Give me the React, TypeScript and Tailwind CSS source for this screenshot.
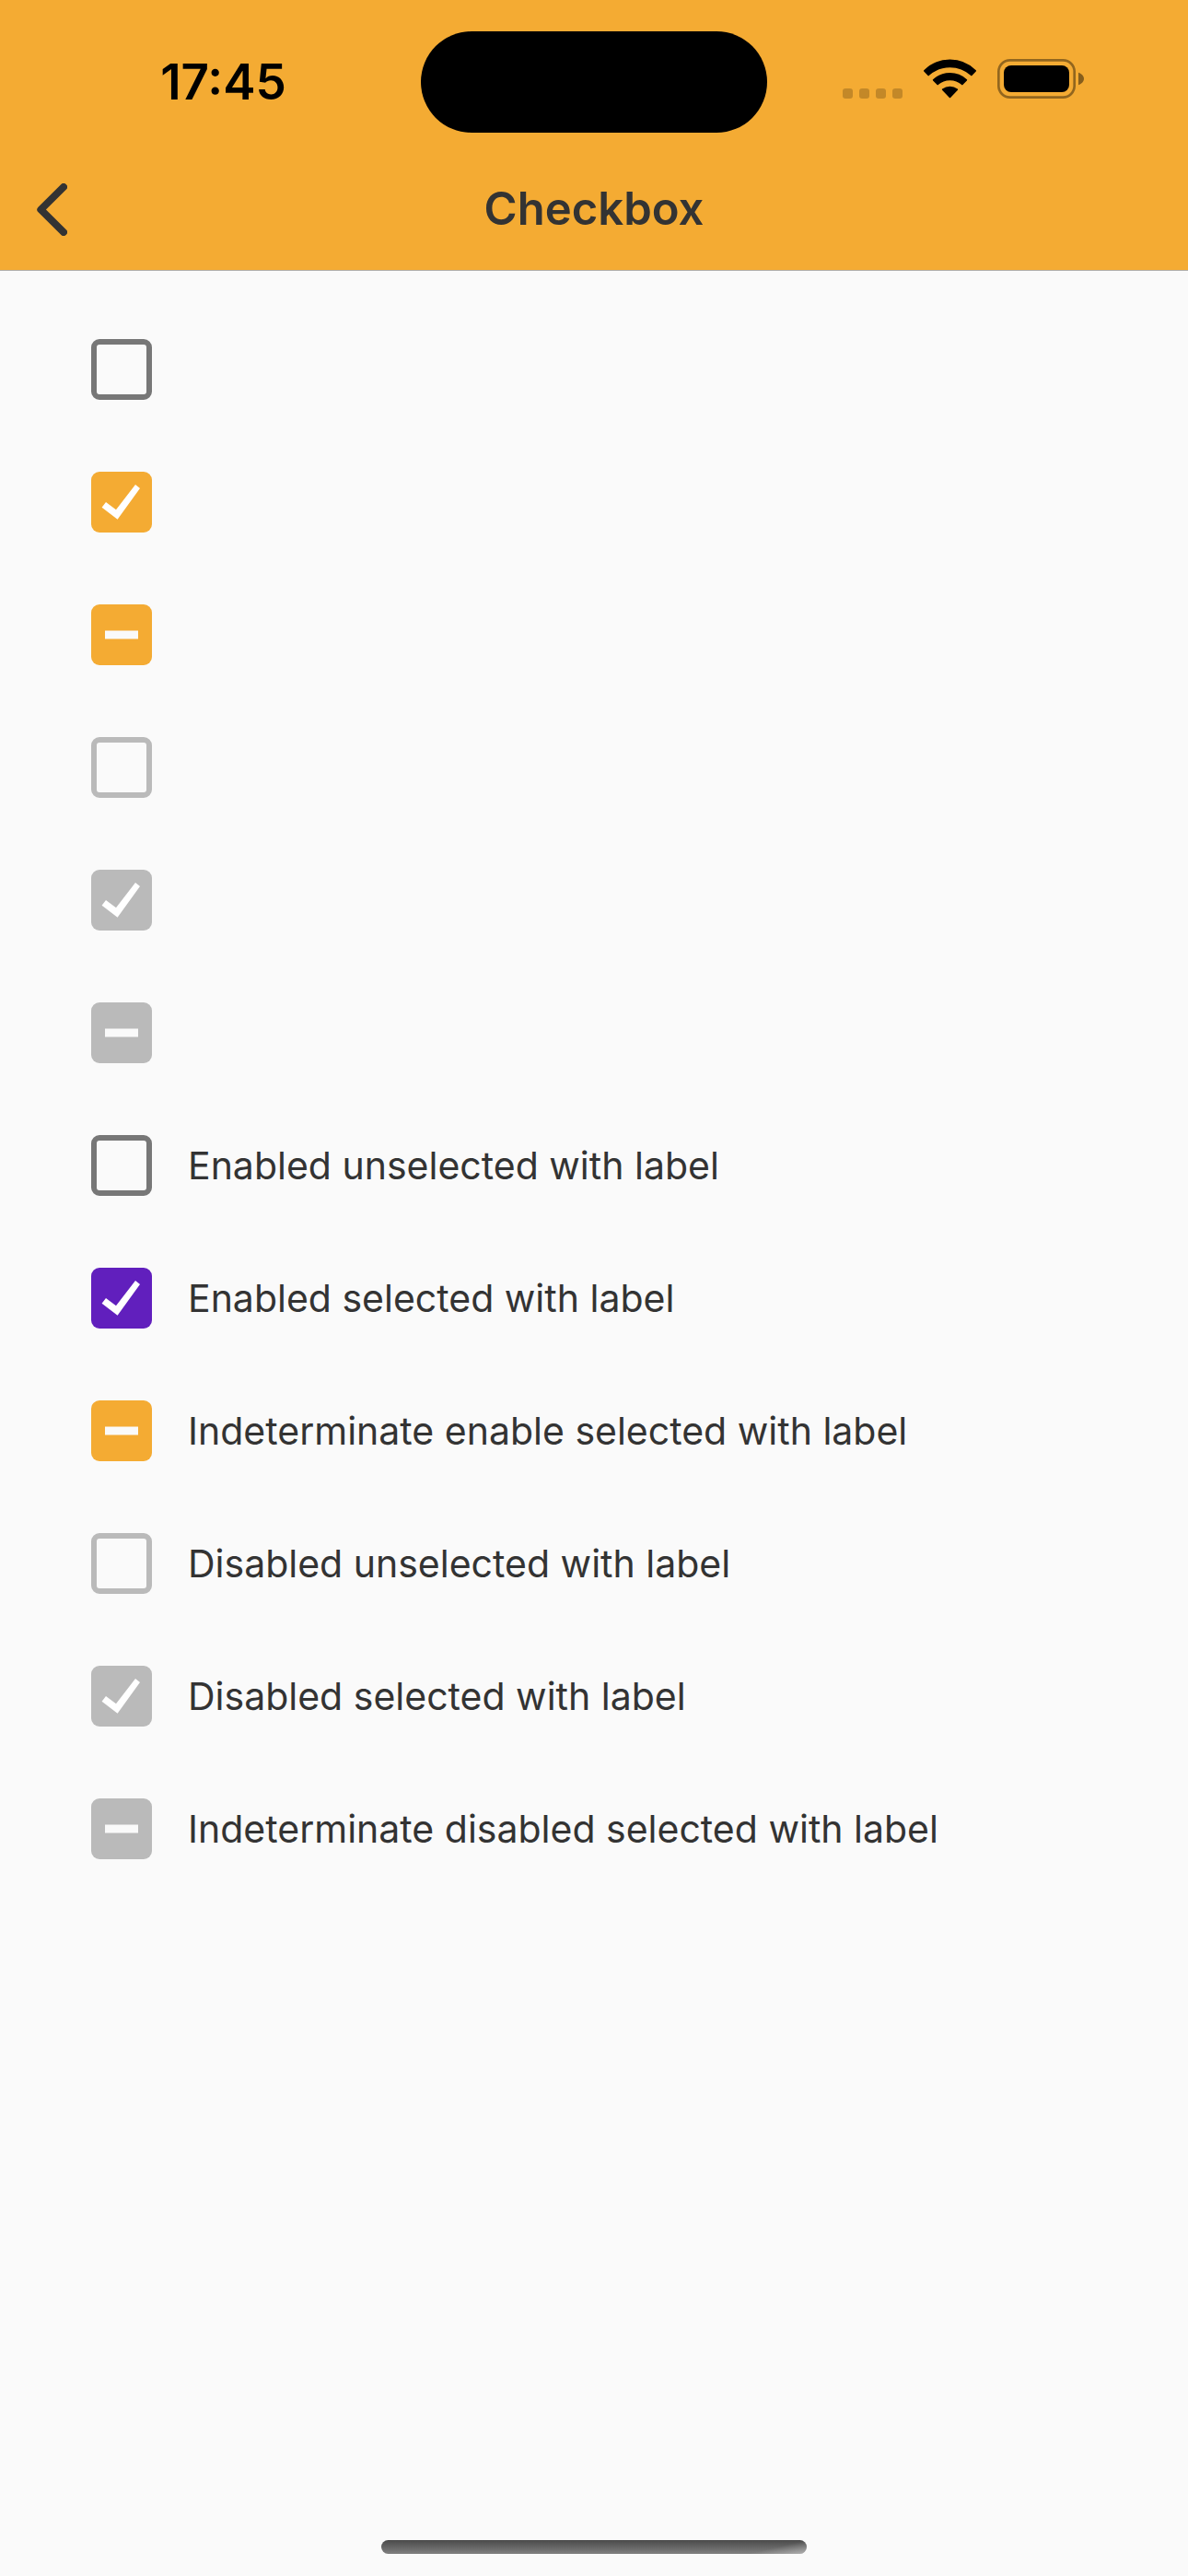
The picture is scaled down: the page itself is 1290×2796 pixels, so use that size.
import { useEffect, useRef, useState } from 'react'
import clsx from 'clsx'

type Mark = 'none' | 'check' | 'dash'

interface Item {
  mark: Mark
  disabled?: boolean
  purple?: boolean
  label?: string
  name: string
}

const items: Item[] = [
  { mark: 'none', name: 'Enabled unselected' },
  { mark: 'check', name: 'Enabled selected' },
  { mark: 'dash', name: 'Enabled indeterminate' },
  { mark: 'none', disabled: true, name: 'Disabled unselected' },
  { mark: 'check', disabled: true, name: 'Disabled selected' },
  { mark: 'dash', disabled: true, name: 'Disabled indeterminate' },
  { mark: 'none', name: 'l1', label: 'Enabled unselected with label' },
  { mark: 'check', purple: true, name: 'l2', label: 'Enabled selected with label' },
  { mark: 'dash', name: 'l3', label: 'Indeterminate enable selected with label' },
  { mark: 'none', disabled: true, name: 'l4', label: 'Disabled unselected with label' },
  { mark: 'check', disabled: true, name: 'l5', label: 'Disabled selected with label' },
  { mark: 'dash', disabled: true, name: 'l6', label: 'Indeterminate disabled selected with label' },
]

function CheckRow({ item }: { item: Item }) {
  const [mark, setMark] = useState<Mark>(item.mark)
  const ref = useRef<HTMLInputElement>(null)

  useEffect(() => {
    if (ref.current) ref.current.indeterminate = mark === 'dash'
  }, [mark])

  const empty = mark === 'none'

  return (
    <li className="flex h-36 items-center">
      <label className="flex items-center gap-[39px]">
        <span className="grid size-[66px] shrink-0">
          <input
            ref={ref}
            type="checkbox"
            checked={mark === 'check'}
            disabled={item.disabled}
            aria-label={item.label ? undefined : item.name}
            onChange={() => setMark(mark === 'check' ? 'none' : 'check')}
            className={clsx(
              'col-start-1 row-start-1 size-[66px] appearance-none rounded-[9px]',
              empty && 'border-6',
              empty && (item.disabled ? 'border-[#bababa]' : 'border-[#777777]'),
              !empty && item.disabled && 'bg-[#bababa]',
              !empty && !item.disabled && (item.purple ? 'bg-[#611fbd]' : 'bg-[#f4ab33]'),
            )}
          />
          {!empty && (
            <svg
              viewBox="0 0 66 66"
              className="pointer-events-none col-start-1 row-start-1 size-[66px]"
              aria-hidden="true"
            >
              {mark === 'check' ? (
                <path d="M11.6 38.8 16 33 27 41.3 48 14 53 18 28.6 51.8Z" fill="#ffffff" />
              ) : (
                <path d="M15 28.4H51V37.6H15Z" fill="#fafafa" />
              )}
            </svg>
          )}
        </span>
        {item.label && <span className="text-[41px] leading-[54px] text-[#333333]">{item.label}</span>}
      </label>
    </li>
  )
}

function StatusIcons() {
  return (
    <div className="flex items-end justify-center gap-[23px] pr-1 pb-2">
      <div className="flex gap-[7px]">
        {[0, 1, 2, 3].map((i) => (
          <span key={i} className="size-[11px] rounded-[3px] bg-black/20" />
        ))}
      </div>
      <svg viewBox="342 75 171 129" className="h-[43px] w-[57px]" aria-hidden="true">
        <g stroke="#000" strokeWidth="5" strokeLinejoin="round">
          <path d="M344.500 113.500A117 117 0 0 1 510.500 113.500L497.500 127.500A104 104 0 0 0 357.500 127.500Z" />
          <path d="M374 143.500A79 79 0 0 1 481 143.500L467.500 157.500A60 60 0 0 0 387.500 157.500Z" />
          <path d="M404 174.500A40 40 0 0 1 451 174.500L427.500 199Z" />
        </g>
      </svg>
      <svg viewBox="582 75 282 129" className="h-[43px] w-[94px]" aria-hidden="true">
        <rect x="586" y="79" width="247" height="121" rx="37" fill="none" stroke="#000" strokeOpacity=".4" strokeWidth="8" />
        <rect x="603" y="96" width="213" height="87" rx="24" />
        <path d="M846 119C857 123 864 131 864 139.500S857 156 846 160Z" fillOpacity=".45" />
      </svg>
    </div>
  )
}

export default function App() {
  return (
    <div className="flex min-h-screen flex-col bg-[#fafafa] font-['Inter',sans-serif]">
      <header className="border-b border-[#b0aeab] bg-[#f4ab33]">
        <div className="grid h-[178px] grid-cols-[1fr_376px_1fr] items-center px-7">
          <time className="text-center text-[53px] leading-[60px] font-semibold text-black">17:45</time>
          <div className="h-[110px] rounded-[56px] bg-black" />
          <StatusIcons />
        </div>
        <div className="grid h-[115px] grid-cols-[1fr_auto_1fr] items-center px-10 pb-[17px]">
          <button type="button" aria-label="Back" className="justify-self-start">
            <svg viewBox="120 595 99 171" className="h-[57px] w-[33px]" aria-hidden="true">
              <path
                d="M207 607 133 680.500 207 754"
                fill="none"
                stroke="#333333"
                strokeWidth="24"
                strokeLinecap="round"
                strokeLinejoin="round"
              />
            </svg>
          </button>
          <h1 className="text-[49px] leading-[60px] font-semibold text-[#333333]">Checkbox</h1>
        </div>
      </header>
      <main className="flex-1 px-[99px] pt-[35px]">
        <ul>
          {items.map((item) => (
            <CheckRow key={item.name} item={item} />
          ))}
        </ul>
      </main>
      <footer className="flex justify-center pb-6">
        <div className="flex h-[15px] w-[462px] justify-end overflow-hidden rounded-full bg-linear-to-b from-[#4a4a4a] to-[#808080]">
          <div className="w-16 bg-linear-to-br from-transparent from-50% to-white/40" />
        </div>
      </footer>
    </div>
  )
}
